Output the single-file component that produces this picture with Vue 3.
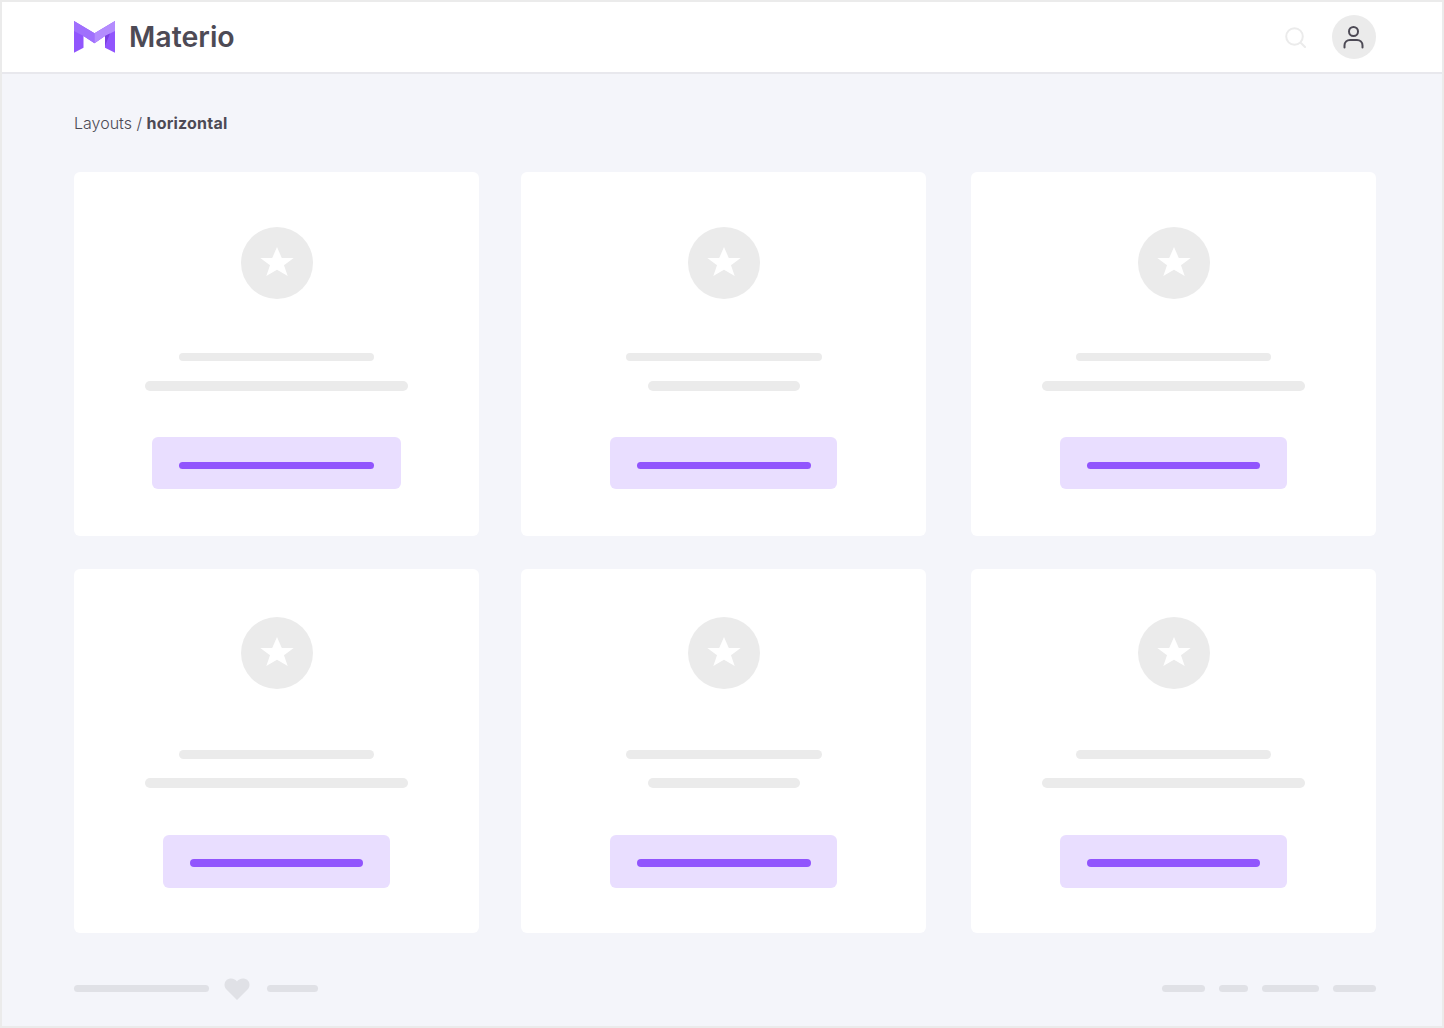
<script setup>
const cards = [
  { id: 1, first: 195, second: 263, button: 249, bar: 195 },
  { id: 2, first: 196, second: 152, button: 227, bar: 174 },
  { id: 3, first: 195, second: 263, button: 227, bar: 173 },
  { id: 4, first: 195, second: 263, button: 227, bar: 173 },
  { id: 5, first: 196, second: 152, button: 227, bar: 174 },
  { id: 6, first: 195, second: 263, button: 227, bar: 173 },
]
const footerLinks = [43, 29, 57, 43]
</script>

<template>
  <div class="frame">
    <header class="header">
      <div class="brand">
        <svg class="logo" width="41" height="32" viewBox="0 0 41 32">
          <path d="M0 0 L20.5 12.300 L41 0 V31.700 L31 26.700 V15 L20.500 22.300 L9.500 15 V26.700 L0 31.700 Z" fill="#9155fd" />
          <path d="M0 0 L20.500 12.300 V22.300 L9.500 15 L0 10 Z" fill="#a070fd" />
          <path d="M41 0 L20.500 12.300 V22.300 L31 15 L41 10 Z" fill="#b48cfe" />
          <path d="M31 15 L36 12.500 L31 25 Z" fill="#7a3fe0" />
        </svg>
        <span class="brand-name">Materio</span>
      </div>
      <div class="actions">
        <svg width="21" height="21" viewBox="0 0 21 21" fill="none" stroke="#ebebeb" stroke-width="2" stroke-linecap="round">
          <circle cx="9.500" cy="9.500" r="8.300" />
          <path d="M16 16 L20 20" />
        </svg>
        <div class="avatar">
          <svg width="24" height="24" viewBox="0 0 24 24" fill="none" stroke="#4d4a55" stroke-width="2" stroke-linecap="round">
            <circle cx="11.500" cy="6.500" r="4.500" />
            <path d="M2.500 22.500 V20.500 C2.500 17 5 15 8 15 H15 C18 15 20.500 17 20.500 20.500 V22.500" />
          </svg>
        </div>
      </div>
    </header>

    <main class="content">
      <div class="breadcrumb">Layouts / <b>horizontal</b></div>
      <div class="grid">
        <section v-for="card in cards" :key="card.id" class="card">
          <div class="circle">
            <svg class="star" width="34" height="30" viewBox="0 0 34 30">
              <path d="M17 0 L21.800 11 H33.700 L24 18.300 L27.700 29 L17 22.700 L6.300 29 L10 18.300 L0.300 11 H12.200 Z" fill="#fff" />
            </svg>
          </div>
          <div class="line first" :style="{ width: card.first + 'px' }"></div>
          <div class="line second" :style="{ width: card.second + 'px' }"></div>
          <div class="btn" :style="{ width: card.button + 'px' }">
            <div class="btn-bar" :style="{ width: card.bar + 'px' }"></div>
          </div>
        </section>
      </div>
    </main>

    <footer class="footer">
      <div class="foot-left">
        <span class="foot-bar wide"></span>
        <svg class="heart" width="26" height="22" viewBox="0 0 26 22">
          <path d="M13 22 L2 11 C-1 7.500 0.500 1 6.500 0.500 C9.500 0.300 11.800 1.800 13 3.500 C14.200 1.800 16.500 0.300 19.500 0.500 C25.500 1 27 7.500 24 11 Z" fill="#e0e1e6" />
        </svg>
        <span class="foot-bar short"></span>
      </div>
      <div class="foot-right">
        <span v-for="(w, i) in footerLinks" :key="i" class="foot-bar" :style="{ width: w + 'px' }"></span>
      </div>
    </footer>
  </div>
</template>

<style scoped>
.frame {
  width: 1444px;
  height: 1028px;
  box-sizing: border-box;
  border: 2px solid #ebebeb;
  background: #f4f5fa;
  display: flex;
  flex-direction: column;
  font-family: Inter, "Liberation Sans", sans-serif;
}

.header {
  height: 72px;
  flex: none;
  box-sizing: border-box;
  background: #fff;
  border-bottom: 2px solid #e8e8ed;
  padding: 0 66px 0 72px;
  display: flex;
  align-items: center;
  justify-content: space-between;
}

.brand {
  display: flex;
  align-items: center;
  gap: 14px;
}

.logo {
  display: block;
}

.brand-name {
  font-size: 28.500px;
  font-weight: 600;
  color: #4d4a55;
  margin-bottom: 2px;
}

.actions {
  display: flex;
  align-items: center;
  gap: 26px;
}

.avatar {
  width: 44px;
  height: 44px;
  border-radius: 50%;
  background: #ebebeb;
  display: flex;
  align-items: center;
  justify-content: center;
}

.content {
  padding: 39px 66px 0 72px;
}

.breadcrumb {
  font-size: 16px;
  line-height: 20px;
  font-weight: 300;
  color: #4d4a55;
}

.breadcrumb b {
  font-weight: 700;
  letter-spacing: 0.2px;
}

.grid {
  margin-top: 39px;
  display: grid;
  grid-template-columns: 447px 450px 405px;
  grid-auto-rows: 364px;
  row-gap: 33px;
}

.card {
  width: 405px;
  box-sizing: border-box;
  background: #fff;
  border-radius: 6px;
  padding-top: 55px;
  display: flex;
  flex-direction: column;
  align-items: center;
}

.card:nth-child(n + 4) {
  padding-top: 48px;
}

.circle {
  width: 72px;
  height: 72px;
  border-radius: 50%;
  background: #ebebeb;
  display: flex;
  align-items: center;
  justify-content: center;
}

.star {
  margin-bottom: 2px;
}

.line {
  background: #ebebeb;
  border-radius: 5px;
}

.first {
  height: 8px;
  margin-top: 54px;
}

.card:nth-child(n + 4) .first {
  height: 9px;
  margin-top: 61px;
}

.second {
  height: 10px;
  margin-top: 20px;
}

.card:nth-child(n + 4) .second {
  margin-top: 19px;
}

.btn {
  height: 52px;
  box-sizing: border-box;
  padding-top: 5px;
  margin-top: 46px;
  background: #e9deff;
  border-radius: 6px;
  display: flex;
  align-items: center;
  justify-content: center;
}

.card:nth-child(n + 4) .btn {
  height: 53px;
  padding-top: 3px;
  margin-top: 47px;
}

.btn-bar {
  height: 7px;
  background: #9155fd;
  border-radius: 4px;
}

.card:nth-child(n + 4) .btn-bar {
  height: 8px;
}

.footer {
  margin-top: 42px;
  padding: 0 66px 0 72px;
  height: 26px;
  display: flex;
  align-items: center;
  justify-content: space-between;
}

.foot-left,
.foot-right {
  display: flex;
  align-items: center;
  gap: 14px;
}

.foot-left {
  gap: 15px;
}

.heart {
  margin-right: 2px;
  margin-top: 2px;
}

.foot-bar {
  display: block;
  height: 7px;
  background: #e0e1e6;
  border-radius: 4px;
}

.wide {
  width: 135px;
}

.short {
  width: 51px;
}
</style>
